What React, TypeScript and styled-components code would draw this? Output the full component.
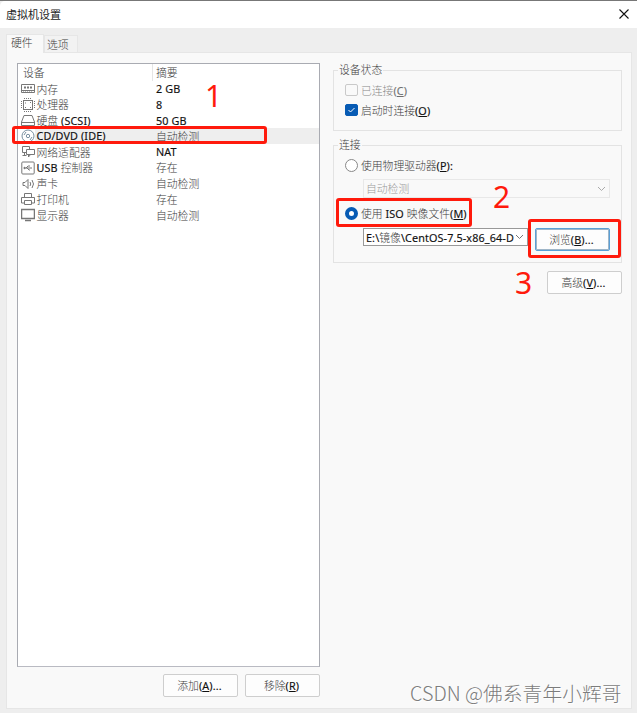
import React from "react";
import styled, { createGlobalStyle } from "styled-components";

const Global = createGlobalStyle`
  * { box-sizing: border-box; }
  body { margin: 0; background: #eee; overflow: hidden; }
`;

const Dialog = styled.main`
  position: relative;
  width: 637px;
  height: 713px;
  display: flex;
  flex-direction: column;
  background: #eeeeee;
  border-top: 1px solid #777;
  font-family: "Noto Sans", "Noto Sans CJK SC", sans-serif;
  font-size: 10.8px;
  line-height: 16px;
  color: #111;
  white-space: nowrap;
`;

const TitleBar = styled.header`
  height: 27px;
  flex: none;
  display: flex;
  align-items: center;
  justify-content: space-between;
  padding: 0 8px 2px 6px;
  background: #fff;
  border-radius: 5px 0 0 0;
  font: 11px/16px "Noto Sans CJK SC", sans-serif;
  color: #222;
`;

const Tabs = styled.nav`
  display: flex;
  align-items: flex-end;
  height: 24px;
  flex: none;
  padding-left: 6px;
`;

const Tab = styled.div<{ $active?: boolean }>`
  width: ${p => (p.$active ? 38 : 34)}px;
  height: ${p => (p.$active ? 19 : 17)}px;
  line-height: ${p => (p.$active ? 15 : 16)}px;
  margin-bottom: ${p => (p.$active ? -1 : 0)}px;
  padding: ${p => (p.$active ? "0 0 0 4px" : "0 0 0 2px")};
  position: relative;
  z-index: ${p => (p.$active ? 1 : 0)};
  background: ${p => (p.$active ? "#f9f9f9" : "#f2f2f2")};
  border: 1px solid #e6e6e6;
  border-bottom: 0;
`;

const Page = styled.section`
  flex: 1;
  margin: 0 5px 4px 6px;
  padding: 10px;
  display: flex;
  gap: 13px;
  background: #f9f9f9;
  border: 1px solid #e6e6e6;
`;

const ListColumn = styled.div`
  width: 303px;
  flex: none;
`;

const DeviceList = styled.div`
  height: 604px;
  border: 1px solid #a9abb2;
  border-bottom-color: #b9bac2;
  background: #fff;
`;

const Row = styled.div<{ $selected?: boolean; $header?: boolean }>`
  display: grid;
  grid-template-columns: 134px 1fr;
  height: ${p => (p.$header ? 16.5 : 15.75)}px;
  align-items: center;
  background: linear-gradient(to right, transparent 17px, ${p => (p.$selected ? "#eeeeee" : "transparent")} 17px);
`;

const Cell = styled.div<{ $pad?: number; $line?: boolean }>`
  display: flex;
  align-items: center;
  gap: 2px;
  height: 100%;
  padding-left: ${p => p.$pad ?? 3}px;
  border-left: 1px solid ${p => (p.$line ? "#e5e5e5" : "transparent")};
`;

const Icon = styled.svg`
  width: 14px;
  height: 14px;
  flex: none;
  margin-right: -0.5px;
  fill: none;
  stroke: #777;
  stroke-width: 1;
`;

const ButtonBar = styled.div`
  display: flex;
  justify-content: flex-end;
  gap: 7px;
  padding-top: 7px;
`;

const Button = styled.button<{ $focus?: boolean }>`
  width: 75px;
  height: 23px;
  flex: none;
  padding: 0 2px 0 0;
  display: flex;
  align-items: center;
  justify-content: center;
  font: inherit;
  color: #111;
  background: #fdfdfd;
  border: 1px solid ${p => (p.$focus ? "#5a9fd6" : "#cecece")};
  border-radius: 2px;
  box-shadow: ${p => (p.$focus ? "inset 0 0 0 1px #9fb6c8" : "none")};
`;

const Settings = styled.div`
  width: 289px;
  flex: none;
  display: flex;
  flex-direction: column;
`;

const Group = styled.fieldset<{ $h: number; $top: number }>`
  min-width: 0;
  height: ${p => p.$h}px;
  margin: ${p => p.$top}px 0 0;
  padding: 0 11px;
  border: 1px solid #e3e3e3;
`;

const Legend = styled.legend`
  margin-left: -7px;
  padding: 0 1px;
  height: 16px;
  line-height: 14px;
`;

const Option = styled.label<{ $top: number; $disabled?: boolean }>`
  display: flex;
  align-items: center;
  gap: 3px;
  height: 16px;
  line-height: 15px;
  margin-top: ${p => p.$top}px;
  opacity: ${p => (p.$disabled ? 0.6 : 1)};
`;

const Check = styled.span<{ $on?: boolean }>`
  width: 13px;
  height: 12px;
  flex: none;
  display: flex;
  border: 1px solid ${p => (p.$on ? "#075bb4" : "#aaa")};
  border-radius: 2px;
  background: ${p => (p.$on ? "#075bb4" : "#fafafa")};
`;

const Radio = styled.span<{ $on?: boolean }>`
  width: 13px;
  height: 13px;
  flex: none;
  border: ${p => (p.$on ? "4px solid #075bb4" : "1px solid #888")};
  border-radius: 50%;
  background: #fff;
`;

const Select = styled.div<{ $disabled?: boolean }>`
  display: flex;
  align-items: center;
  justify-content: space-between;
  width: ${p => (p.$disabled ? 247 : 165)}px;
  height: ${p => (p.$disabled ? 19 : 18)}px;
  padding: 0 3px 0 2px;
  background: ${p => (p.$disabled ? "#f9f9f9" : "#fff")};
  border: 1px solid ${p => (p.$disabled ? "#e8e8e8" : "#999")};
`;

const Indented = styled.div<{ $top: number }>`
  display: flex;
  align-items: flex-start;
  gap: 7px;
  padding-left: 18px;
  margin-top: ${p => p.$top}px;
`;

const AdvancedBar = styled.div`
  display: flex;
  justify-content: flex-end;
  margin-top: 8px;
`;

const Han = styled.span<{ $soft?: boolean }>`
  font-family: "Noto Sans CJK SC", sans-serif;
  font-weight: 300;
  color: ${p => (p.$soft ? "#999" : "#3c3c3c")};
`;

const Latin = styled.span`
  letter-spacing: 0.12px;
  -webkit-text-stroke: 0.15px currentColor;
`;

const Marker = styled.div<{ $x: number; $y: number; $w: number; $h: number }>`
  position: absolute;
  left: ${p => p.$x}px;
  top: ${p => p.$y - 1}px;
  width: ${p => p.$w}px;
  height: ${p => p.$h}px;
  border: 3px solid #ff1a0c;
  border-radius: 3px;
  pointer-events: none;
`;

const Step = styled.div<{ $x: number; $y: number }>`
  position: absolute;
  left: ${p => p.$x}px;
  top: ${p => p.$y - 1}px;
  font: 30px/32px "Noto Sans", sans-serif;
  color: #ff1a0c;
`;

const Watermark = styled.div`
  position: absolute;
  left: 410px;
  top: 678px;
  font: 300 19.8px/28px "Noto Sans CJK SC", sans-serif;
  color: #7c7c7c;
  text-shadow: 1px 1px 0 #fff;
`;

// Splits a label into Chinese and Latin runs; "&" marks the access key.
function Label({ text, soft }: { text: string; soft?: boolean }) {
  const runs = text.match(/[\u4e00-\u9fff]+|[^\u4e00-\u9fff]+/g) ?? [];
  return (
    <span>
      {runs.map((run, i) => {
        if (/[\u4e00-\u9fff]/.test(run)) return <Han key={i} $soft={soft}>{run}</Han>;
        const [before, after] = run.split("&");
        return (
          <Latin key={i}>
            {before}
            {after && <><u>{after[0]}</u>{after.slice(1)}</>}
          </Latin>
        );
      })}
    </span>
  );
}

const icons: Record<string, React.ReactNode> = {
  memory: <><path d="M.5 2.5h13v8H.5zM1 8.5h12" /><path d="M3 4.5h2v2H3zM6 4.5h2v2H6zM9 4.5h2v2H9z" fill="#777" stroke="none" /><path d="M2 10h10" strokeDasharray="1 1" /></>,
  cpu: <><rect x="2.5" y="2.5" width="9" height="9" /><path d="M.5 3v8M13.5 3v8M3 .5h8M3 13.5h8" strokeDasharray="1 1" /><path d="M4 5h1M9 4.5h1M4 9.5h1M9 9.5h1" /></>,
  disk: <><path d="M3 1.5h8l2.5 6.5v3.5H.5V8zM.5 8.5h13" /></>,
  cd: <><circle cx="7" cy="7" r="6" stroke="#7890a0" /><circle cx="7" cy="7" r="1.7" stroke="#7890a0" /><path d="M3 6l2-3M9 11l2-3" stroke="#7890a0" /></>,
  network: <><path d="M5 7.5H1.5v-6h7V4M1.5 10.5h4M3.5 7.5v3" /><path d="M5.5 4.5h8v5h-8zM9.5 9.5l-2 2.5v-2.5" /></>,
  usb: <><rect x=".8" y="1" width="12.4" height="12" rx="1" /><path d="M3 7h8M5 7l2-2h2M6 7l2 2h1" /><circle cx="3.5" cy="7" r=".7" fill="#777" /></>,
  sound: <><path d="M2 5.5h2l3-3v9l-3-3H2zM9 5q1.5 2 0 4M11 3q3 4 0 8" /></>,
  printer: <><path d="M3.5 5V1.5h7V5M3.5 11h-3V5.5h13V11h-3" /><path d="M3.5 8.5h7v4h-7z" /></>,
  display: <><path d="M.6 1.5h12.8v9H.6z" strokeWidth="1.3" /><path d="M4 12.5h6" strokeWidth="1.5" /></>,
};

const devices = [
  ["memory", "内存", "2 GB"],
  ["cpu", "处理器", "8"],
  ["disk", "硬盘 (SCSI)", "50 GB"],
  ["cd", "CD/DVD (IDE)", "自动检测"],
  ["network", "网络适配器", "NAT"],
  ["usb", "USB 控制器", "存在"],
  ["sound", "声卡", "自动检测"],
  ["printer", "打印机", "存在"],
  ["display", "显示器", "自动检测"],
];

const Chevron = ({ color }: { color: string }) => (
  <svg width="9" height="6" viewBox="0 0 9 6" fill="none" stroke={color}><path d="M1 1l3.5 3.5L8 1" /></svg>
);

export default function App() {
  return (
    <Dialog>
      <Global />
      <TitleBar>
        虚拟机设置
        <svg width="10" height="10" viewBox="0 0 10 10" stroke="#111" strokeWidth="1.1"><path d="M.5.5l9 9M9.5.5l-9 9" /></svg>
      </TitleBar>
      <Tabs>
        <Tab $active><Label text="硬件" /></Tab>
        <Tab><Label text="选项" /></Tab>
      </Tabs>
      <Page>
        <ListColumn>
          <DeviceList>
            <Row $header>
              <Cell $pad={4}><Label text="设备" /></Cell>
              <Cell $line><Label text="摘要" /></Cell>
            </Row>
            {devices.map(([icon, name, summary]) => (
              <Row key={name} $selected={icon === "cd"}>
                <Cell $pad={2}><Icon viewBox="0 0 14 14">{icons[icon]}</Icon><Label text={name} /></Cell>
                <Cell><Label text={summary} /></Cell>
              </Row>
            ))}
          </DeviceList>
          <ButtonBar>
            <Button><Label text="添加(&A)..." /></Button>
            <Button><Label text="移除(&R)" /></Button>
          </ButtonBar>
        </ListColumn>
        <Settings>
          <Group $h={69} $top={-1}>
            <Legend><Label text="设备状态" /></Legend>
            <Option $top={4} $disabled><Check /><Label text="已连接(&C)" /></Option>
            <Option $top={4}>
              <Check $on><svg width="11" height="10" viewBox="0 0 10 10" fill="none" stroke="#fff"><path d="M2 5l2 2 4-4" /></svg></Check>
              <Label text="启动时连接(&O)" />
            </Option>
          </Group>
          <Group $h={126} $top={6}>
            <Legend><Label text="连接" /></Legend>
            <Option $top={4}><Radio /><Label text="使用物理驱动器(&P):" /></Option>
            <Indented $top={6}>
              <Select $disabled><Label text="自动检测" soft /><Chevron color="#aaa" /></Select>
            </Indented>
            <Option $top={7}><Radio $on /><Label text="使用 ISO 映像文件(&M)" /></Option>
            <Indented $top={7}>
              <Select><Label text="E:\镜像\CentOS-7.5-x86_64-D" /><Chevron color="#777" /></Select>
              <Button $focus><Label text="浏览(&B)..." /></Button>
            </Indented>
          </Group>
          <AdvancedBar><Button><Label text="高级(&V)..." /></Button></AdvancedBar>
        </Settings>
      </Page>
      <Marker $x={12} $y={126} $w={255} $h={18} />
      <Marker $x={336} $y={198} $w={136} $h={29} />
      <Marker $x={528} $y={219} $w={93} $h={39} />
      <Step $x={205} $y={80}>1</Step>
      <Step $x={493} $y={181}>2</Step>
      <Step $x={515} $y={267}>3</Step>
      <Watermark>CSDN @佛系青年小辉哥</Watermark>
    </Dialog>
  );
}
